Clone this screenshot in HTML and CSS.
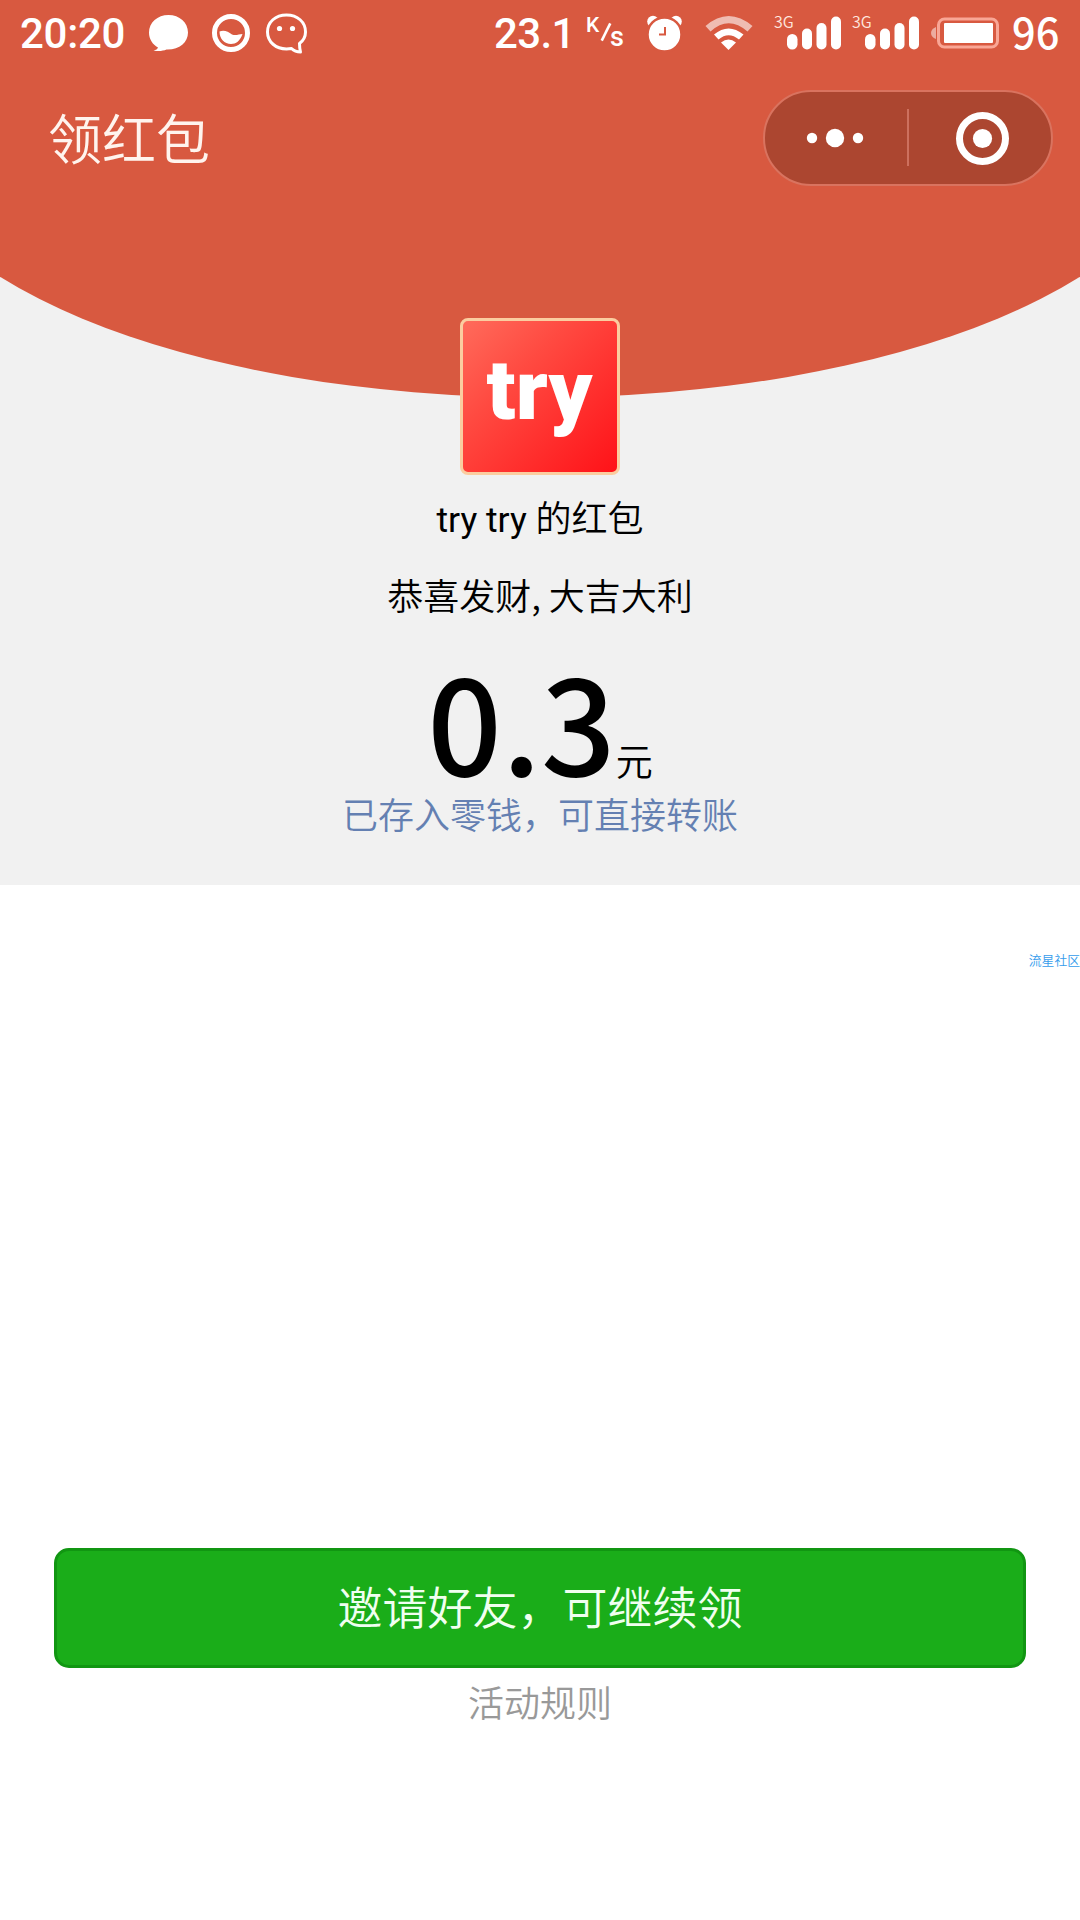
FILE: index.html
```html
<!DOCTYPE html>
<html lang="zh-CN">
<head>
<meta charset="utf-8">
<title>领红包</title>
<link rel="stylesheet" href="styles.css">
</head>
<body>
<main class="screen">
  <section class="hero">
    <svg class="arc" viewBox="0 0 1080 400" aria-hidden="true"><ellipse cx="540" cy="127.5" rx="648" ry="270"/><path d="M0 0H1080V277H0Z"/></svg>
    <header class="status">
      <span class="clock">20:20</span>
      <svg class="notices" viewBox="140 0 180 66" aria-hidden="true">
        <path fill="#fff" d="M168.500 15C157.500 15 149 22.500 149 32.500C149 39 152.500 44.500 158 47.500C157.500 49 156 50 153.500 50.500C158.500 51.500 163 51 166.500 49.500C179 50 188 42.500 188 32.500C188 22.500 179.500 15 168.500 15Z"/>
        <circle cx="231" cy="33" r="16.500" fill="none" stroke="#fff" stroke-width="5"/>
        <path fill="#fff" d="M219.500 31.500C224 29.500 228 31.500 232 34.500C236 36 239 34 242.500 34C240 41 236 44 231 44C224.500 44 219.500 39 219.500 31.500Z"/>
        <path fill="none" stroke="#fff" stroke-width="3" stroke-linejoin="round" d="M299.500 43.500C303.500 40.500 305.500 36.500 305.500 32C305.500 22 297.500 15 286.500 15C275.500 15 267.500 22 267.500 32C267.500 42 276 49 286.500 49L291.500 48.500C294 51 297 52 300.500 52Q299.500 48 299.500 43.500Z"/>
        <circle cx="279.500" cy="28.500" r="2.600" fill="#fff"/><circle cx="292.500" cy="28.500" r="2.600" fill="#fff"/>
      </svg>
      <span class="speed">23.1</span>
      <span class="unit"><b class="kilo">K</b><svg class="slash" viewBox="0 0 14 24" aria-hidden="true"><path d="M2 22L12 2"/></svg><b class="sec">s</b></span>
      <svg class="signals" viewBox="640 0 370 66" aria-hidden="true">
        <g fill="#fff">
          <circle cx="653" cy="21.500" r="5.800"/><circle cx="676" cy="21.500" r="5.800"/>
          <circle cx="664.500" cy="34.500" r="17" stroke="#d85940" stroke-width="2.500"/>
          <path d="M665 27V34.500H659" fill="none" stroke="#d85940" stroke-width="2"/>
          <path d="M728.500 50L721 42.500Q728.500 36.500 736 42.500Z"/>
          <path d="M714 34.500Q728.500 22.500 743.500 34.500L739 39.500Q728.500 31 718.500 39.500Z"/>
          <path opacity=".6" d="M705.500 26Q728.500 6 752.500 26L747.500 31.500Q728.500 15 710.500 31.500Z"/>
          <g id="bars"><rect x="787" y="34" width="10.500" height="15.500" rx="5.200"/><rect x="802" y="28.500" width="10" height="21" rx="5"/><rect x="816.500" y="23" width="10" height="26.500" rx="5"/><rect x="831" y="16.500" width="10" height="33" rx="5"/></g>
          <use href="#bars" x="78"/>
          <rect x="944" y="23" width="49" height="20" rx="1"/>
          <path opacity=".5" d="M936 27Q931 29 931 33T936 39Z"/>
        </g>
        <rect x="938.500" y="19" width="59" height="28" rx="6" fill="none" stroke="#f9a695" stroke-width="3"/>
        <text class="net" x="774" y="28">3G</text><text class="net" x="852" y="28">3G</text>
      </svg>
      <span class="level">96</span>
    </header>
    <nav class="titlebar">
      <h1 class="title">领红包</h1>
      <svg class="capsule" viewBox="0 0 290 96" role="img" aria-label="菜单">
        <rect x="1" y="1" width="288" height="94" rx="47" fill="#ac4630" stroke="#d9735f" stroke-width="2"/>
        <path d="M145 19V76" stroke="#cd705e" stroke-width="2"/>
        <g fill="#fff"><circle cx="49" cy="48" r="5.200"/><circle cx="72" cy="48" r="9.200"/><circle cx="95" cy="48" r="5.200"/><circle cx="219.500" cy="48.500" r="9.600"/></g>
        <circle cx="219.500" cy="48.500" r="23" fill="none" stroke="#fff" stroke-width="7"/>
      </svg>
    </nav>
    <div class="avatar"><svg class="logo" viewBox="0 0 154 151"><text x="23.500" y="98" textLength="106" lengthAdjust="spacingAndGlyphs">try</text></svg></div>
    <p class="sender"><span class="nick">try try </span>的红包</p>
    <p class="wish">恭喜发财, 大吉大利</p>
    <p class="amount"><span class="number">0.3</span><span class="yuan">元</span></p>
    <p class="balance">已存入零钱，可直接转账</p>
  </section>
  <p class="mark">流星社区</p>
  <button class="invite">邀请好友，可继续领</button>
  <p class="rules">活动规则</p>
</main>
</body>
</html>
```
FILE: styles.css
```css
* { box-sizing: border-box; }
body { margin: 0; background: #fff; }
p, h1 { margin: 0; font-weight: 350; white-space: nowrap; }

.screen {
  display: flex;
  flex-direction: column;
  align-items: center;
  width: 1080px;
  height: 1920px;
  overflow: hidden;
  font-family: "Noto Sans CJK SC", sans-serif;
  font-weight: 350;
  color: #000;
}

.hero {
  position: relative;
  isolation: isolate;
  display: flex;
  flex-direction: column;
  align-items: center;
  width: 1080px;
  height: 885px;
  background: #f1f1f1;
}
.arc {
  position: absolute;
  z-index: -1;
  top: 0;
  left: 0;
  width: 1080px;
  height: 400px;
  fill: #d85940;
}

.status {
  display: flex;
  width: 1080px;
  height: 66px;
  padding-left: 20px;
  color: #fff;
  font-family: Roboto, sans-serif;
  font-weight: 500;
  font-size: 42px;
  line-height: 68px;
}
.clock { width: 120px; letter-spacing: -0.3px; }
.notices { width: 180px; height: 66px; }
.speed { width: 92px; margin-left: 174px; letter-spacing: -0.6px; }
.unit { display: flex; width: 54px; }
.unit b { font-weight: 500; line-height: 1; }
.kilo { width: 14px; padding-top: 15px; font-size: 21px; }
.slash { width: 12px; height: 24px; margin-top: 20px; fill: none; stroke: #fff; stroke-width: 3; }
.sec { margin-left: -2px; padding-top: 24px; font-size: 27px; }
.signals { width: 370px; height: 66px; }
.net { font: 350 16px "Noto Sans CJK SC", sans-serif; fill: #ffe6df; }
.level { margin-left: 2px; font-family: "Noto Sans CJK SC", sans-serif; font-size: 41.5px; line-height: 62px; }

.titlebar {
  display: flex;
  justify-content: space-between;
  width: 1080px;
  height: 252px;
  padding: 24px 27px 0 48px;
}
.title { font-size: 54px; line-height: 94px; color: #fff4ee; }
.capsule { width: 290px; height: 96px; }

.avatar {
  width: 160px;
  height: 157px;
  border: 3px solid #fbcda0;
  border-radius: 8px;
  background: linear-gradient(135deg, #ff6b5b, #ff4a41 35%, #ff1218);
}
.logo { display: block; width: 154px; height: 151px; }
.logo text { font: 900 84px Roboto, sans-serif; fill: #fff; }

.sender, .wish { font-size: 36px; line-height: 54px; }
.sender { margin-top: 14px; }
.nick { font: 400 35.5px/1 Roboto, sans-serif; }
.wish { margin-top: 24px; }
.amount {
  display: flex;
  align-items: baseline;
  height: 180px;
  margin-top: 8px;
  line-height: 180px;
}
.number { font-size: 131px; font-weight: 500; }
.yuan { font-size: 37px; }
.balance { margin-top: -14px; font-size: 36px; line-height: 36px; color: #6480b2; }

.mark {
  align-self: flex-end;
  margin-top: 65px;
  font-size: 12.8px;
  line-height: 20px;
  color: #359cec;
}
.invite {
  width: 972px;
  height: 120px;
  margin-top: 578px;
  padding: 0 0 6px;
  border: 3px solid #119612;
  border-radius: 15px;
  background: #1aad19;
  color: #f0fff0;
  font: 350 45px "Noto Sans CJK SC", sans-serif;
}
.rules { margin-top: 7px; font-size: 36px; line-height: 52px; color: #999; }
```
